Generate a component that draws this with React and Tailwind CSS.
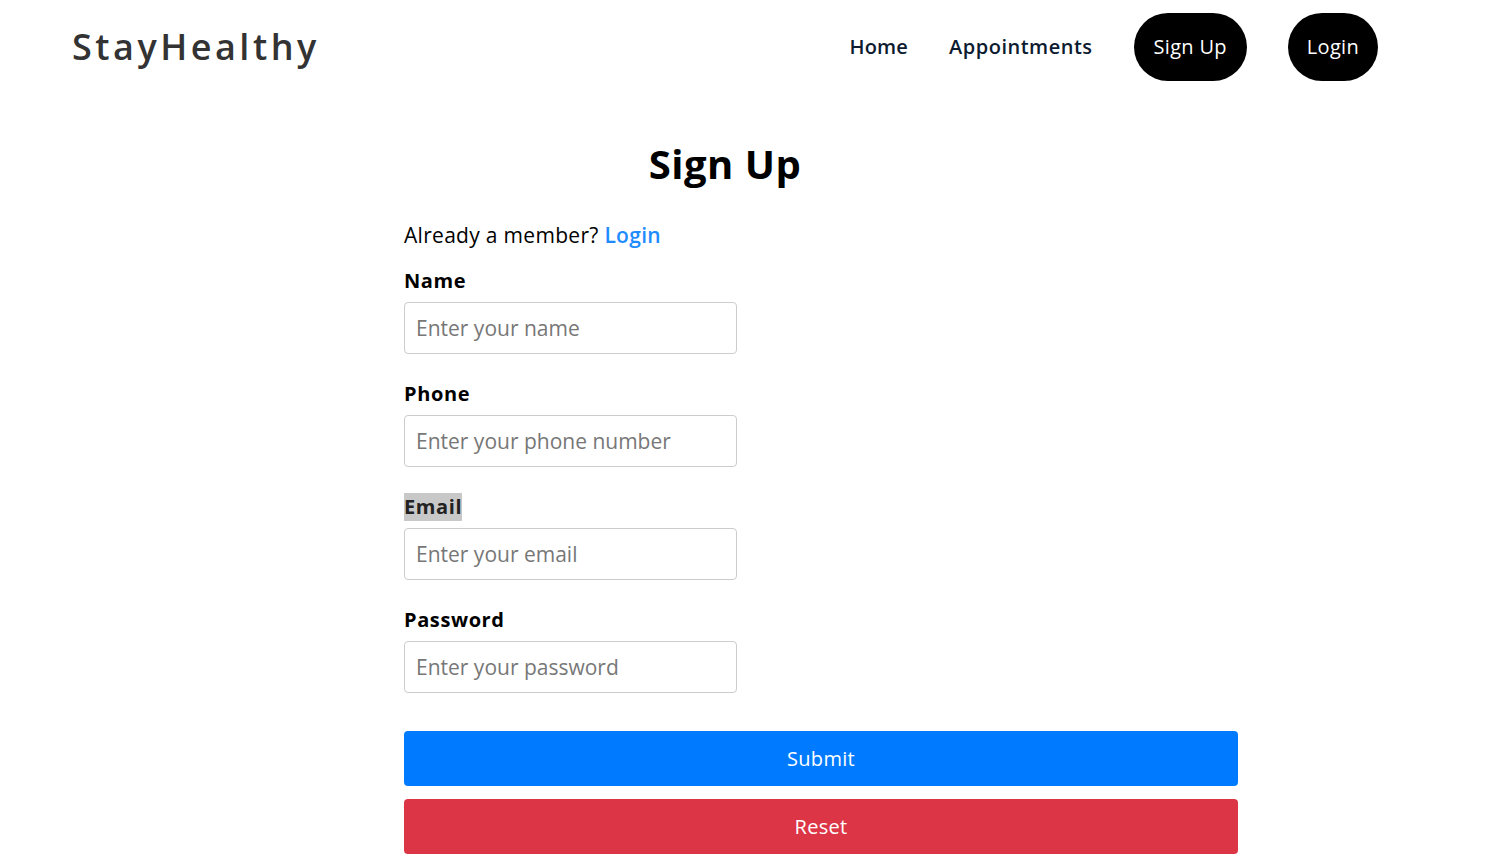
export default function App() {
  const font = { fontFamily: '"Open Sans", "Noto Sans", sans-serif' };
  const fields = [
    { label: "Name", ph: "Enter your name", type: "text" },
    { label: "Phone", ph: "Enter your phone number", type: "tel" },
    { label: "Email", ph: "Enter your email", type: "email", hl: true },
    { label: "Password", ph: "Enter your password", type: "password" },
  ];
  return (
    <div className="min-h-[866px] bg-white" style={font}>
      <nav className="h-[94px] flex items-center justify-between pl-[72px] pr-[112px]">
        <div className="text-[36px] font-semibold text-[#333333] tracking-[3.5px]">StayHealthy</div>
        <div className="flex items-center gap-[41px]">
          <a className="text-[20px] font-semibold text-[#0d1b30] tracking-[0.2px]">Home</a>
          <a className="text-[20px] font-semibold text-[#0d1b30] tracking-[0.5px]">Appointments</a>
          <button className="h-[68px] px-[20px] rounded-full bg-black text-white text-[20px] tracking-[0.3px]">Sign Up</button>
          <button className="h-[68px] px-[19px] rounded-full bg-black text-white text-[20px] tracking-[0.3px]">Login</button>
        </div>
      </nav>
      <div className="pt-[44px] flex justify-center pr-[40px]">
        <h1 className="text-[40px] font-bold text-black leading-[52px] tracking-[0.5px]">Sign Up</h1>
      </div>
      <div className="ml-[404px] w-[834px] mt-[30px]">
        <div className="text-[21px] text-black leading-[30px] tracking-[0.3px]">
          Already a member? <a className="text-[#1e8cff] font-semibold">Login</a>
        </div>
        <div className="flex flex-col mt-[12px]">
          {fields.map((f) => (
            <div key={f.label} className="flex flex-col items-start mt-[5px] mb-[21px]">
              <label className={"text-[20px] font-bold leading-[28px] tracking-[0.6px] " + (f.hl ? "bg-[#c8c8c8] text-[#222]" : "text-black")}>{f.label}</label>
              <input
                type={f.type === "password" ? "text" : f.type}
                placeholder={f.ph}
                className="mt-[7px] w-[333px] h-[52px] border border-[#cccccc] rounded-[4px] px-[11px] text-[21px] placeholder:text-[#777777] outline-none"
                style={font}
              />
            </div>
          ))}
        </div>
        <div className="mt-[17px] flex flex-col gap-[13px]">
          <button className="h-[55px] w-full rounded-[4px] bg-[#007bff] text-white text-[20px] tracking-[0.3px]">Submit</button>
          <button className="h-[55px] w-full rounded-[4px] bg-[#dc3545] text-white text-[20px] tracking-[0.3px]">Reset</button>
        </div>
      </div>
    </div>
  );
}
